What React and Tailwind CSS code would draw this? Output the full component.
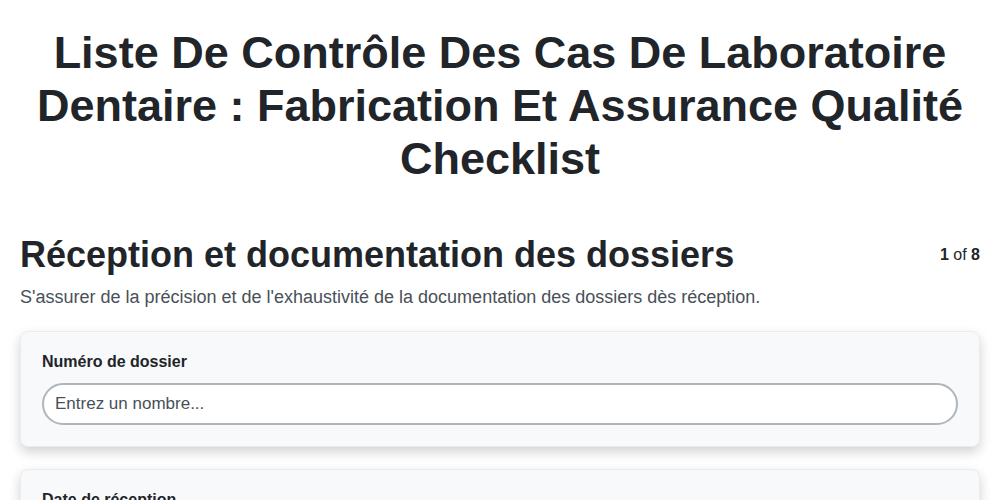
export default function App() {
  return (
    <div className="min-h-screen bg-white text-[#212529]" style={{ fontFamily: '"Liberation Sans", Arial, sans-serif' }}>
      <div className="px-5 pt-[26px]">
        <h1 className="text-center text-[45px] font-bold leading-[53px] px-2">
          Liste De Contrôle Des Cas De Laboratoire Dentaire : Fabrication Et Assurance Qualité Checklist
        </h1>

        <div className="mt-[48px] flex items-start justify-between">
          <h2 className="text-[36px] font-bold leading-[43px]">Réception et documentation des dossiers</h2>
          <div className="text-base pt-[10px]">
            <span className="font-bold">1</span> of <span className="font-bold">8</span>
          </div>
        </div>
        <p className="mt-2 text-[18px] leading-[27px] text-[#495057]">
          S'assurer de la précision et de l'exhaustivité de la documentation des dossiers dès réception.
        </p>

        <div className="mt-5 flex flex-col gap-[22px]">
          <div className="rounded-lg border border-[#e9ecef] bg-[#f8f9fa] px-[21px] pt-[20px] pb-[21px] shadow-[0_5px_12px_rgba(0,0,0,0.18)]">
            <label className="block text-base font-bold leading-5 mb-[11px]">Numéro de dossier</label>
            <input
              type="text"
              placeholder="Entrez un nombre..."
              className="w-full h-[42px] rounded-full border-2 border-[#adb5bd] bg-white pl-[11px] pr-3 text-[17px] text-[#495057] placeholder:text-[#495057] outline-none"
            />
          </div>
          <div className="rounded-lg border border-[#e9ecef] bg-[#f8f9fa] px-[21px] pt-[20px] pb-[21px] shadow-[0_5px_12px_rgba(0,0,0,0.18)]">
            <label className="block text-base font-bold leading-5 mb-[11px]">Date de réception</label>
            <input
              type="text"
              className="w-full h-[42px] rounded-full border-2 border-[#adb5bd] bg-white pl-[11px] pr-3 text-[17px] text-[#495057] outline-none"
            />
          </div>
        </div>
      </div>
    </div>
  );
}
